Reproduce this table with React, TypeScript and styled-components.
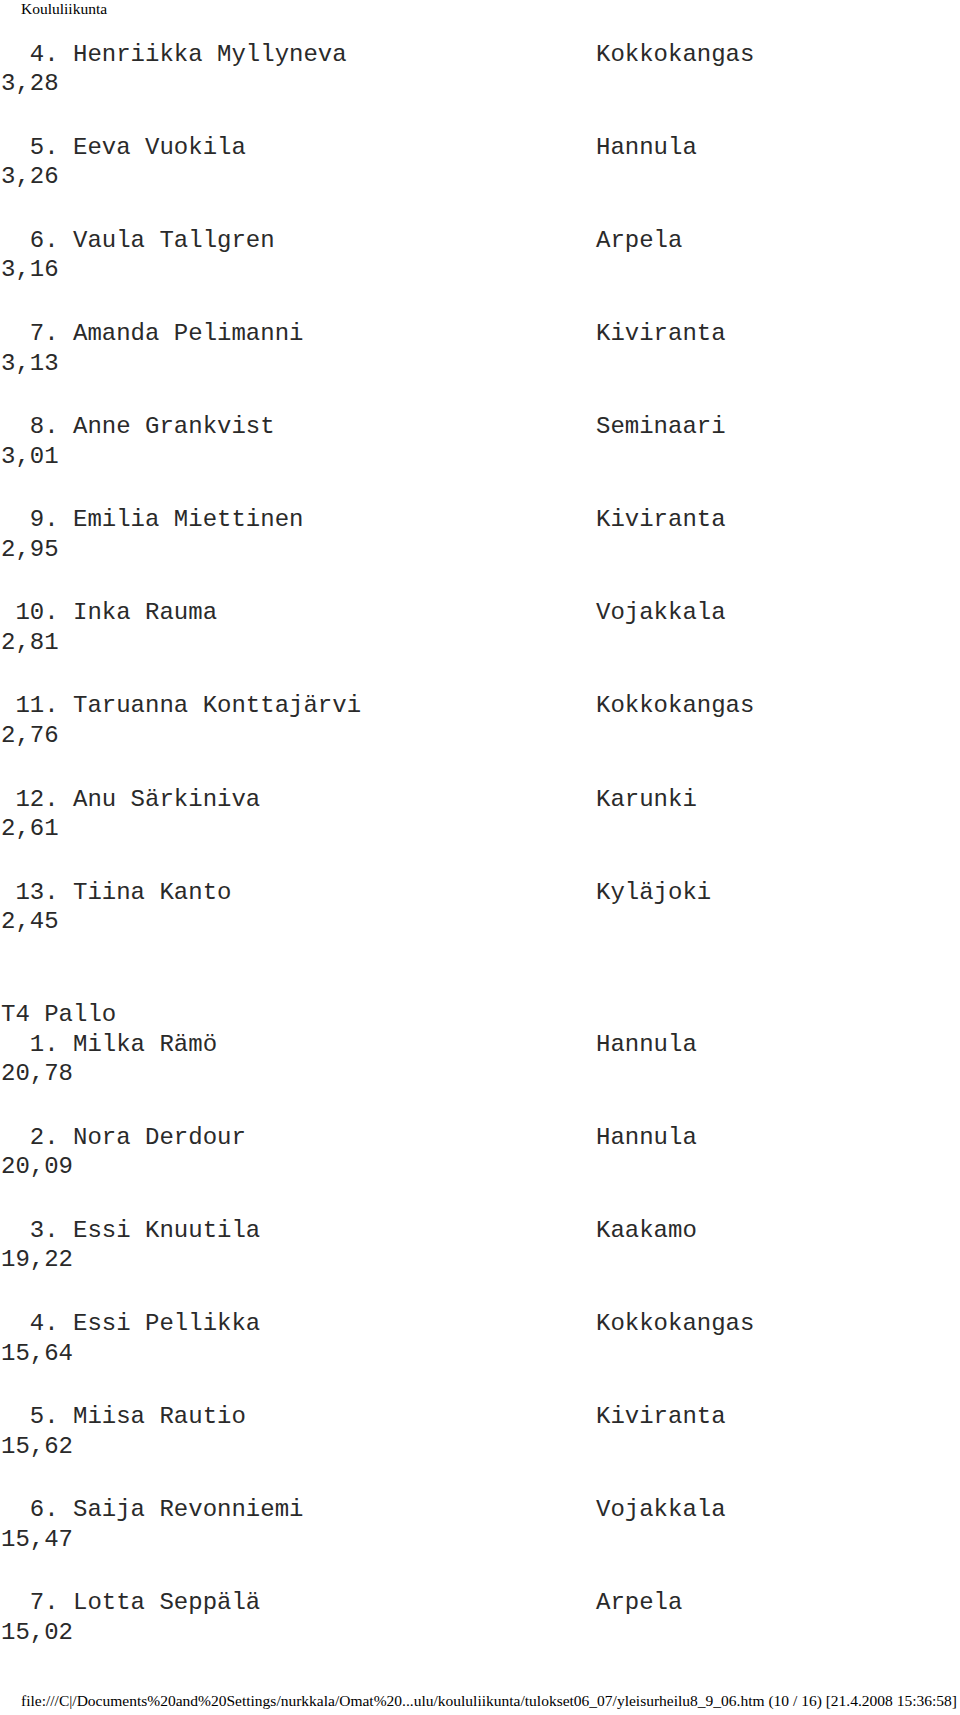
import React from "react";
import styled, { createGlobalStyle } from "styled-components";

const Global = createGlobalStyle`
  html, body { margin: 0; padding: 0; background: #fff; }
  body { font-family: "Liberation Serif", "Times New Roman", serif; }
`;

type Entry = { rank: number; name: string; club: string; score: string };

const first: Entry[] = [
  { rank: 4, name: "Henriikka Myllyneva", club: "Kokkokangas", score: "3,28" },
  { rank: 5, name: "Eeva Vuokila", club: "Hannula", score: "3,26" },
  { rank: 6, name: "Vaula Tallgren", club: "Arpela", score: "3,16" },
  { rank: 7, name: "Amanda Pelimanni", club: "Kiviranta", score: "3,13" },
  { rank: 8, name: "Anne Grankvist", club: "Seminaari", score: "3,01" },
  { rank: 9, name: "Emilia Miettinen", club: "Kiviranta", score: "2,95" },
  { rank: 10, name: "Inka Rauma", club: "Vojakkala", score: "2,81" },
  { rank: 11, name: "Taruanna Konttajärvi", club: "Kokkokangas", score: "2,76" },
  { rank: 12, name: "Anu Särkiniva", club: "Karunki", score: "2,61" },
  { rank: 13, name: "Tiina Kanto", club: "Kyläjoki", score: "2,45" },
];

const pallo: Entry[] = [
  { rank: 1, name: "Milka Rämö", club: "Hannula", score: "20,78" },
  { rank: 2, name: "Nora Derdour", club: "Hannula", score: "20,09" },
  { rank: 3, name: "Essi Knuutila", club: "Kaakamo", score: "19,22" },
  { rank: 4, name: "Essi Pellikka", club: "Kokkokangas", score: "15,64" },
  { rank: 5, name: "Miisa Rautio", club: "Kiviranta", score: "15,62" },
  { rank: 6, name: "Saija Revonniemi", club: "Vojakkala", score: "15,47" },
  { rank: 7, name: "Lotta Seppälä", club: "Arpela", score: "15,02" },
];

const Page = styled.div`
  width: 960px;
  min-height: 1715px;
  box-sizing: border-box;
  color: #000;
  display: flex;
  flex-direction: column;
`;

const Header = styled.div`
  padding-left: 21px;
  font-family: "Liberation Serif", "Times New Roman", serif;
  font-size: 15.5px;
  line-height: 18px;
  color: #000;
`;

const Results = styled.div`
  margin-top: 21.8px;
  padding-left: 1px;
  font-family: "Liberation Mono", "Courier New", monospace;
  font-size: 24px;
  line-height: 29.5px;
  color: #2a2a2a;
  display: flex;
  flex-direction: column;
  gap: 63.6px;
`;

const Section = styled.div`
  display: flex;
  flex-direction: column;
`;

const Group = styled.div`
  margin-bottom: 34.1px;
  &:last-child { margin-bottom: 0; }
`;

const Line = styled.div`
  white-space: pre;
  height: 29.5px;
`;

const NameRow = styled(Line)`
  display: grid;
  grid-template-columns: 595px auto;
`;

const SectionTitle = styled(Line)``;

const Footer = styled.div`
  margin-top: 45px;
  padding-left: 21px;
  font-family: "Liberation Serif", "Times New Roman", serif;
  font-size: 15.5px;
  line-height: 18px;
  white-space: nowrap;
  color: #000;
`;

const pad = (n: number) => (n < 10 ? "  " : " ") + n + ". ";

function ResultGroup({ e }: { e: Entry }) {
  return (
    <Group>
      <NameRow>
        <span>{pad(e.rank) + e.name}</span>
        <span>{e.club}</span>
      </NameRow>
      <Line>{e.score}</Line>
    </Group>
  );
}

export default function App() {
  return (
    <Page>
      <Global />
      <Header>Koululiikunta</Header>
      <Results>
        <Section>
          {first.map((e) => (
            <ResultGroup key={"a" + e.rank} e={e} />
          ))}
        </Section>
        <Section>
          <SectionTitle>T4 Pallo</SectionTitle>
          {pallo.map((e) => (
            <ResultGroup key={"b" + e.rank} e={e} />
          ))}
        </Section>
      </Results>
      <Footer>
        file:///C|/Documents%20and%20Settings/nurkkala/Omat%20...ulu/koululiikunta/tulokset06_07/yleisurheilu8_9_06.htm (10 / 16) [21.4.2008 15:36:58]
      </Footer>
    </Page>
  );
}
